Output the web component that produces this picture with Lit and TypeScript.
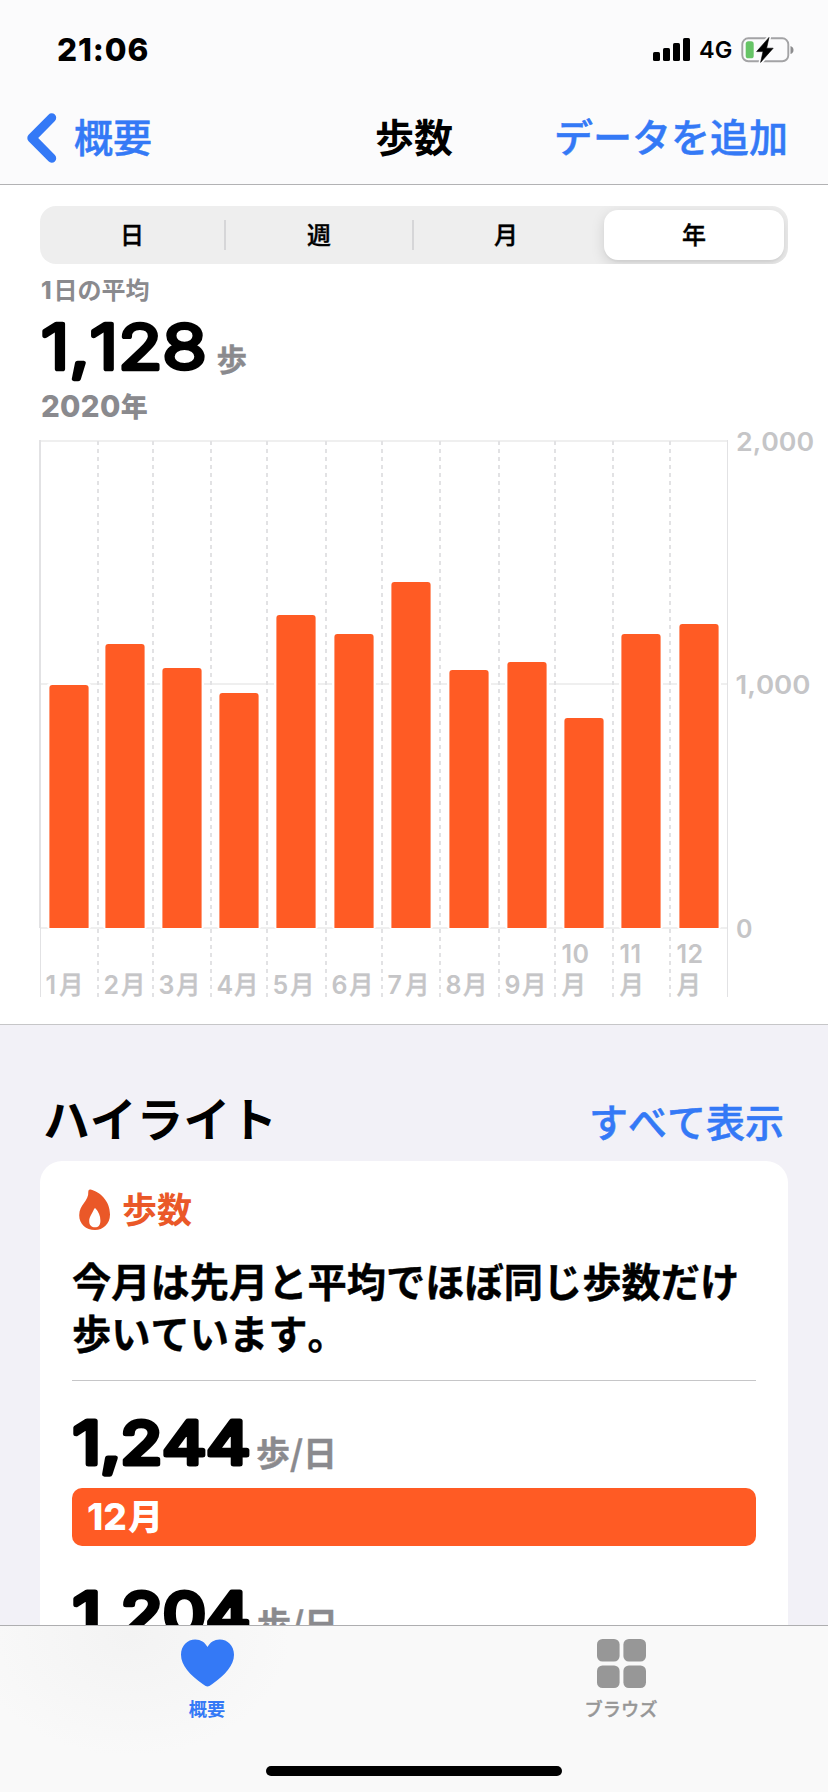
import { LitElement, html, svg, css } from "lit";
import { customElement, property } from "lit/decorators.js";

interface Month {
  label: string[];
  start: number;
  bar: number;
  top: number;
}

const MONTHS: Month[] = [
  { label: ["1月"], start: 40, bar: 49, top: 685 },
  { label: ["2月"], start: 98, bar: 105, top: 644 },
  { label: ["3月"], start: 153, bar: 162, top: 668 },
  { label: ["4月"], start: 211, bar: 219, top: 693 },
  { label: ["5月"], start: 267, bar: 276, top: 615 },
  { label: ["6月"], start: 326, bar: 334, top: 634 },
  { label: ["7月"], start: 382, bar: 391, top: 582 },
  { label: ["8月"], start: 440, bar: 449, top: 670 },
  { label: ["9月"], start: 499, bar: 507, top: 662 },
  { label: ["10", "月"], start: 555, bar: 564, top: 718 },
  { label: ["11", "月"], start: 613, bar: 621, top: 634 },
  { label: ["12", "月"], start: 670, bar: 679, top: 624 },
];

const BASE = 928;

/* Large rounded figure followed by its unit. */
@customElement("step-figure")
class StepFigure extends LitElement {
  @property() value = "";
  @property() unit = "";
  @property({ type: Number }) height = 68;
  @property({ type: Number }) baseline = 55;
  @property({ type: Number }) valueSize = 62;
  @property({ type: Number }) valueWeight = 400;
  @property({ type: Number }) valueWidth = 160;
  @property({ type: Number }) unitX = 176;
  @property({ type: Number }) unitSize = 30;
  @property({ type: Number }) unitWidth = 30;
  @property({ type: Number }) outline = 4;

  static styles = css`
    :host { display: block; }
    svg { display: block; overflow: visible; }
    .value {
      font-family: Inter, "Noto Sans CJK JP", sans-serif;
      fill: #000;
      stroke: #000;
      stroke-linejoin: round;
      stroke-linecap: round;
    }
    .unit {
      font-family: "Noto Sans CJK JP", sans-serif;
      font-weight: 700;
      fill: #8a8a8e;
      stroke: #8a8a8e;
      stroke-width: 0.4px;
    }
  `;

  render() {
    return html`<svg width="400" height=${this.height} viewBox="0 0 400 ${this.height}">
      <text class="value" x="1" y=${this.baseline - this.outline / 2} stroke-width=${this.outline}
        font-size=${this.valueSize} font-weight=${this.valueWeight}
        textLength=${this.valueWidth} lengthAdjust="spacingAndGlyphs">${this.value}</text>
      <text class="unit" x=${this.unitX} y=${this.baseline - 1} font-size=${this.unitSize}
        textLength=${this.unitWidth} lengthAdjust="spacing">${this.unit}</text>
    </svg>`;
  }
}

@customElement("year-chart")
class YearChart extends LitElement {
  static styles = css`
    :host { display: block; }
    svg { display: block; }
    .text {
      font-family: Inter, "Noto Sans CJK JP", sans-serif;
      font-weight: 600;
      font-size: 25px;
      fill: #c5c5c7;
    }
    .kanji {
      font-family: "Noto Sans CJK JP", sans-serif;
      font-weight: 500;
      font-size: 24.5px;
      stroke: #c5c5c7;
      stroke-width: 0.4px;
    }
    .dash { stroke: #e2e2e4; stroke-width: 2; stroke-dasharray: 4 4; }
    .rule { fill: #efefef; }
    .edge { fill: #e2e2e4; }
    .halo { fill: #fff; }
    .bar { fill: #ff5b24; }
  `;

  private month(m: Month) {
    const x = m.bar + 0.4;
    return svg`
      <rect class="halo" x=${m.bar - 2} y=${m.top - 2} width="44" height=${BASE - m.top + 3} rx="3"></rect>
      <path class="bar" d=${`M${x} ${BASE}V${m.top + 3}q0 -3 3 -3h33.2q3 0 3 3V${BASE}z`}></path>`;
  }

  private label(m: Month) {
    if (m.label.length === 2) {
      return svg`
        <text class="text" x=${m.start + 6.5} y="963" letter-spacing="0.4">${m.label[0]}</text>
        <text class="text kanji" x=${m.start + 6.5} y="994">${m.label[1]}</text>`;
    }
    const wide = m.label[0][0] === "1" ? 13 : 17;
    return svg`
      <text class="text" x=${m.start + 5.5} y="994">${m.label[0][0]}</text>
      <text class="text kanji" x=${m.start + 6 + wide} y="994">月</text>`;
  }

  render() {
    return html`<svg width="828" height="596" viewBox="0 428 828 596">
      <rect class="rule" x="40" y="440" width="688" height="2"></rect>
      <rect class="rule" x="40" y="683" width="688" height="2"></rect>
      <rect class="rule" x="40" y="927" width="688" height="2"></rect>
      ${MONTHS.map((m) => this.month(m))}
      ${MONTHS.slice(1).map(
        (m) => svg`<line class="dash" x1=${m.start} x2=${m.start} y1="441" y2="997"></line>`
      )}
      <rect class="edge" x="39" y="440" width="2" height="488"></rect>
      <rect class="edge" x="40" y="928" width="1" height="69"></rect>
      <rect class="edge" x="727" y="440" width="1" height="557"></rect>
      ${MONTHS.map((m) => this.label(m))}
      <text class="text" x="736" y="451" textLength="78" lengthAdjust="spacingAndGlyphs">2,000</text>
      <text class="text" x="735.5" y="694" textLength="75" lengthAdjust="spacingAndGlyphs">1,000</text>
      <text class="text" x="736" y="938">0</text>
    </svg>`;
  }
}

@customElement("app-root")
class AppRoot extends LitElement {
  static styles = css`
    :host {
      display: flex;
      flex-direction: column;
      width: 828px;
      height: 1792px;
      overflow: hidden;
      background: #f2f1f7;
      color: #000;
      font-family: "Noto Sans CJK JP", sans-serif;
      font-kerning: none;
    }
    * { box-sizing: border-box; }
    svg { display: block; flex: none; }
    .mixed { font-family: Inter, "Noto Sans CJK JP", sans-serif; }

    header { flex: none; height: 185px; background: #fbfbfc; border-bottom: 1px solid #b2b2b4; }
    .status {
      display: flex; align-items: center; height: 88px;
      padding: 12px 33px 0 57px;
    }
    .time { font: 800 31.5px/76px Inter, sans-serif; letter-spacing: 0.9px; margin-right: auto; }
    .net { font: 600 23.5px/76px Inter, sans-serif; margin: 0 9px 0 8px; width: 33px; white-space: nowrap; }
    .nav {
      display: grid; grid-template-columns: 1fr auto 1fr; align-items: center;
      height: 94px; padding: 0 27px;
      font-size: 39px; line-height: 94px; font-weight: 500; color: #3479f6;
      -webkit-text-stroke: 0.5px #3479f6;
    }
    .back { display: flex; align-items: center; gap: 17px; }
    .back svg { margin-top: 5px; }
    .title { color: #000; font-weight: 700; -webkit-text-stroke: 0; }
    .add { text-align: right; margin-right: 13px; }

    main { flex: 1; min-height: 0; overflow: hidden; }
    .summary { background: #fff; border-bottom: 1px solid #c6c6c8; padding-top: 21px; }
    .segments {
      display: grid; grid-template-columns: 186px 188px 190px 180px;
      height: 58px; margin: 0 40px; padding: 4px 4px 4px 0; border-radius: 16px;
      background: #eee; overflow: hidden; align-items: center;
      font-weight: 500; font-size: 24px; -webkit-text-stroke: 0.4px #000;
    }
    .seg { height: 30px; line-height: 28px; text-align: center; }
    .seg.line { border-right: 2px solid #d6d6d8; }
    .seg.month { padding-right: 6px; }
    .seg.on {
      height: 50px; line-height: 48px; border-radius: 14px; background: #fff;
      box-shadow: 0 4px 14px rgba(0, 0, 0, 0.13), 0 2px 2px rgba(0, 0, 0, 0.04);
    }
    .avg { padding: 1px 0 0 41px; font-weight: 700; font-size: 24px; line-height: 52px; height: 52px; color: #8a8a8e; }
    .avg b { font-weight: 800; margin-right: 2px; }
    .main-figure { margin-left: 40px; }
    .year { padding-left: 41px; height: 44px; line-height: 44px; font-weight: 800; font-size: 29.5px; color: #8a8a8e; letter-spacing: 0.3px; }
    .year span { font-size: 27px; }

    .heading { display: flex; justify-content: space-between; align-items: baseline; height: 136px; padding: 62px 44px 0 43px; }
    .heading h2 { margin: 0; font-size: 46.8px; line-height: 60px; font-weight: 700; }
    .heading a { font-size: 39px; line-height: 60px; font-weight: 500; color: #3479f6; -webkit-text-stroke: 0.5px #3479f6; }
    .card { margin: 0 40px; padding: 22px 32px 0; height: 700px; border-radius: 22px; background: #fff; }
    .kind { display: flex; align-items: center; height: 50px; padding-left: 6px; gap: 11px; color: #ea5828; font-weight: 700; font-size: 35px; line-height: 50px; }
    .kind svg { margin-top: 4px; }
    .note { margin: 21px 0 22px; font-size: 39.25px; line-height: 52px; font-weight: 700; white-space: nowrap; -webkit-text-stroke: 0.4px #000; }
    .rule { height: 1px; background: #c6c6c8; }
    .strip { height: 58px; padding-left: 15px; border-radius: 10px; background: #ff5b24; color: #fff; font-weight: 800; font-size: 37px; line-height: 58px; margin-bottom: 6px; }
    .strip span { font-size: 35px; margin-left: 1px; }

    footer {
      flex: none; height: 167px; border-top: 1px solid #aeaeb0;
      background: radial-gradient(ellipse 160px 120px at 130px 10px, #f3f3f3, #f9f9f9);
    }
    .tabs { display: grid; grid-template-columns: 1fr 1fr; height: 140px; }
    .tab { display: flex; flex-direction: column; align-items: center; padding-top: 13px; font-size: 18.2px; font-weight: 700; line-height: 24px; color: #979797; }
    .tab svg { margin-bottom: 8px; }
    .tab.on { color: #3479f6; }
    .tab .soft { font-weight: 500; -webkit-text-stroke: 0.4px #979797; }
    .home { width: 296px; height: 10px; margin: 0 auto; border-radius: 5px; background: #000; }
  `;

  render() {
    return html`
      <header>
        <div class="status">
          <span class="time">21:06</span>
          <svg width="38" height="24" viewBox="0 0 38 24">
            <rect x="0" y="14" width="7" height="9" rx="1.6"></rect>
            <rect x="10" y="10" width="7" height="13" rx="1.6"></rect>
            <rect x="20" y="5" width="7" height="18" rx="1.6"></rect>
            <rect x="30" y="0" width="7" height="23" rx="1.6"></rect>
          </svg>
          <span class="net">4G</span>
          <svg width="54" height="26" viewBox="0 0 54 26">
            <rect x="1.3" y="1.3" width="46" height="23" rx="6" fill="none" stroke="#a3a3a5" stroke-width="1.9"></rect>
            <rect x="4.7" y="4.3" width="8" height="17" rx="2.6" fill="#66c466"></rect>
            <path d="M49.5 9q3 1 3 4t-3 4z" fill="#8c8c8e"></path>
            <path d="M28 .4 15.6 14.6h6.4L19.6 25.4 32.2 11.2h-6.6z" stroke="#fbfbfc" stroke-width="4" stroke-linejoin="round"></path>
            <path d="M28 .4 15.6 14.6h6.4L19.6 25.4 32.2 11.2h-6.6z" stroke="#000" stroke-width="0.6" stroke-linejoin="round"></path>
          </svg>
        </div>
        <div class="nav">
          <div class="back">
            <svg width="30" height="50" viewBox="0 0 30 50">
              <path d="M24.7 4.8 4.8 25 24.7 45.2" fill="none" stroke="#3479f6" stroke-width="9" stroke-linecap="round" stroke-linejoin="round"></path>
            </svg>
            <span>概要</span>
          </div>
          <span class="title">歩数</span>
          <span class="add">データを追加</span>
        </div>
      </header>
      <main>
        <section class="summary">
          <div class="segments">
            <span class="seg line">日</span>
            <span class="seg line">週</span>
            <span class="seg month">月</span>
            <span class="seg on">年</span>
          </div>
          <div class="avg mixed"><b>1</b>日の平均</div>
          <step-figure class="main-figure" value="1,128" unit="歩" .height=${68} .baseline=${55.5}
            .valueSize=${62} .valueWeight=${300} .valueWidth=${165.5}
            .unitX=${176.5} .unitSize=${30.5} .unitWidth=${30.5} .outline=${4.6}></step-figure>
          <div class="year mixed">2020<span>年</span></div>
          <year-chart></year-chart>
        </section>
        <div class="heading">
          <h2>ハイライト</h2>
          <a>すべて表示</a>
        </div>
        <section class="card">
          <div class="kind">
            <svg width="33" height="42" viewBox="0 0 33 42">
              <path fill="#ea5828" fill-rule="evenodd" d="M10.3 2.5Q10.3 .3 12.5 .6C22 2.8 32 12 32 25.5C32 35 25 41 17 41C8 41 1.2 35 1.2 26.2C1.2 15 11 12.5 10.3 2.5ZM17.6 19.6C16.8 18.8 16.4 19.4 16.1 20C14.8 23.5 11.2 27.5 11.2 32C11.2 36.5 13.8 38.3 17 38.3C20.4 38.3 22.4 36.2 22.4 31.5C22.4 27 20.5 22.8 17.6 19.6Z"></path>
            </svg>
            <span>歩数</span>
          </div>
          <p class="note">今月は先月と平均でほぼ同じ歩数だけ<br />歩いています。</p>
          <div class="rule"></div>
          <step-figure value="1,244" unit="歩/日" .height=${107} .baseline=${85.8}
            .valueSize=${58.5} .valueWeight=${400} .valueWidth=${177.5}
            .unitX=${184} .unitSize=${34} .unitWidth=${81} .outline=${5}></step-figure>
          <div class="strip mixed">12<span>月</span></div>
          <step-figure value="1,204" unit="歩/日" .height=${107} .baseline=${85.8}
            .valueSize=${58.5} .valueWeight=${400} .valueWidth=${177.5}
            .unitX=${185} .unitSize=${34} .unitWidth=${81} .outline=${5}></step-figure>
        </section>
      </main>
      <footer>
        <div class="tabs">
          <div class="tab on">
            <svg width="53" height="49" viewBox="0 0 53 49">
              <path fill="#3479f6" d="M26.5 47.5Q25 47.5 22 45.2C9 36 0 26.5 0 15.8C0 6.5 6.4 .4 14.3 .4C19.7 .4 24 3.2 26.5 8C29 3.2 33.3 .4 38.7 .4C46.6 .4 53 6.5 53 15.8C53 26.5 44 36 31 45.2Q28 47.5 26.5 47.5Z"></path>
            </svg>
            <span>概要</span>
          </div>
          <div class="tab">
            <svg width="49" height="49" viewBox="0 0 49 49" fill="#979797">
              <rect x="0" y="0" width="22.6" height="22.6" rx="5.5"></rect>
              <rect x="26.4" y="0" width="22.6" height="22.6" rx="5.5"></rect>
              <rect x="0" y="26.4" width="22.6" height="22.6" rx="5.5"></rect>
              <rect x="26.4" y="26.4" width="22.6" height="22.6" rx="5.5"></rect>
            </svg>
            <span class="soft">ブラウズ</span>
          </div>
        </div>
        <div class="home"></div>
      </footer>
    `;
  }
}
